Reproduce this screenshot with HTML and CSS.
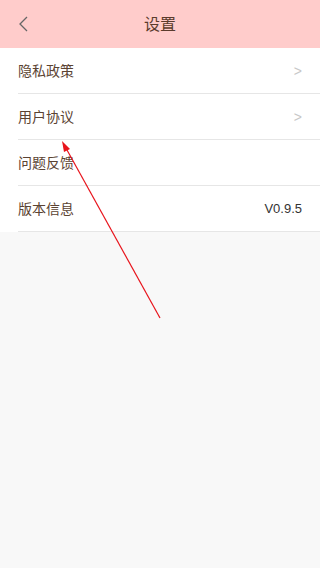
FILE: index.html
```html
<!DOCTYPE html>
<html lang="zh">
<head>
<meta charset="utf-8">
<meta name="viewport" content="width=device-width, initial-scale=1">
<title>设置</title>
<link rel="stylesheet" href="styles.css">
</head>
<body>
<div class="page">
  <header class="topbar">
    <svg class="back" width="12" height="16" viewBox="0 0 12 16"><path d="M9 1 L2 8 L9 15" fill="none" stroke="#666" stroke-width="1.3"/></svg>
    <h1 class="title">设置</h1>
  </header>
  <ul class="list">
    <li class="row"><span class="label">隐私政策</span><span class="chev">&gt;</span></li>
    <li class="row"><span class="label">用户协议</span><span class="chev">&gt;</span></li>
    <li class="row"><span class="label">问题反馈</span></li>
    <li class="row"><span class="label">版本信息</span><span class="ver">V0.9.5</span></li>
  </ul>
  <svg class="annot" width="320" height="568" viewBox="0 0 320 568">
    <line x1="160" y1="318" x2="67" y2="150" stroke="#e8141c" stroke-width="1.2"/>
    <polygon points="62,141 64,152 70,149" fill="#e8141c"/>
  </svg>
</div>
</body>
</html>
```
FILE: styles.css
```css
html, body {
  margin: 0;
  padding: 0;
  background: #f8f8f8;
}
body {
  font-family: "Noto Sans CJK SC", "Noto Sans", sans-serif;
}
.page {
  position: relative;
  width: 320px;
  height: 568px;
  overflow: hidden;
  background: #f8f8f8;
}
.topbar {
  height: 48px;
  box-sizing: border-box;
  padding-bottom: 2px;
  background: #ffcccb;
  display: flex;
  align-items: center;
  justify-content: center;
  position: relative;
}
.back {
  position: absolute;
  left: 18px;
  top: 16px;
}
.title {
  margin: 0;
  font-size: 16px;
  font-weight: normal;
  color: #5a3b2c;
  line-height: 1;
}
.list {
  list-style: none;
  margin: 0;
  padding: 0 0 0 18px;
  background: #fff;
}
.row {
  height: 45px;
  box-sizing: content-box;
  border-bottom: 1px solid #e6e6e6;
  display: flex;
  align-items: center;
  justify-content: space-between;
  padding-right: 18px;
}
.label {
  font-size: 14px;
  line-height: 1;
  padding-bottom: 2px;
  color: #5b4332;
}
.chev {
  font-family: "Liberation Sans", sans-serif;
  font-size: 14px;
  color: #c8c8c8;
}
.ver {
  font-family: "Liberation Sans", sans-serif;
  font-size: 13px;
  color: #333;
}
.annot {
  position: absolute;
  left: 0;
  top: 0;
  pointer-events: none;
}
```
